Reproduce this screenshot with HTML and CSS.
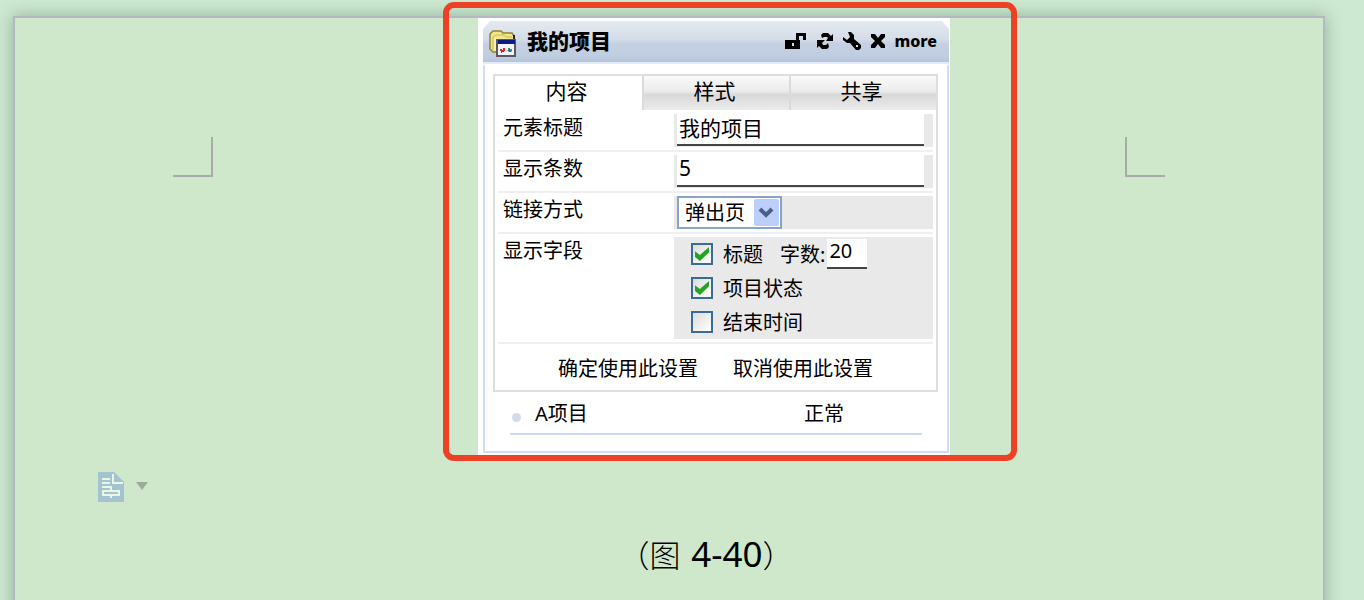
FILE: index.html
```html
<!DOCTYPE html>
<html lang="zh-CN">
<head>
    <meta charset="UTF-8">
    <meta name="viewport" content="width=device-width, initial-scale=1.0">
    <title>我的项目</title>
    <link rel="stylesheet" href="styles.css">
</head>
<body>
    <div class="page">
        <div class="page-margin">
            <div class="corner corner-left"></div>
            <button class="paste-btn" type="button" aria-label="粘贴选项">
                <svg width="52" height="30" viewBox="0 0 52 30">
                    <path d="M0 0h16l10 10v20H0z" fill="#a3c3d1"/>
                    <path d="M15 2v9h10M4 7h8M4 11h8M4 15h9v4M13 23v3M5 19h16v4H5z" fill="none" stroke="#e9f6e4" stroke-width="2"/>
                    <path d="M38 10h12l-6 8z" fill="#9eab9c"/>
                </svg>
            </button>
        </div>

        <div class="page-body">
            <div class="figure">
                <div class="widget">
                    <div class="widget-header">
                        <svg class="folder" width="28" height="28" viewBox="0 0 28 28">
                            <path d="M1 4l3-3h8l2 2h9l2 3v13l-3 3H4l-3-3z" fill="#f3e684" stroke="#8c8434" stroke-width="1.5"/>
                            <path d="M4 20V7l3-2h8l2 2h6" fill="none" stroke="#c9b94d"/>
                            <path d="M5 8h4v12H5z" fill="#fdf0b0"/>
                            <path d="M25 5v5" stroke="#222" stroke-width="2"/>
                            <rect x="8" y="10" width="18" height="16" fill="#f3f5fa" stroke="#5a5a5a" stroke-width="2"/>
                            <path d="M9 10h17v4H9z" fill="#0b1c86"/>
                            <path d="M11 19h2v1h1v-2h2v3h-1v1h-2v1h-1v-2h-1z" fill="#e0242a"/>
                            <path d="M19 18h2v1h2v2h-4z" fill="#29a544"/>
                            <path d="M18 20h3l2 2h-3z" fill="#3659d8"/>
                        </svg>
                        <h2>我的项目</h2>
                        <div class="tools">
                            <button type="button" aria-label="锁定">
                                <svg width="22" height="18" viewBox="0 0 22 18">
                                    <path d="M0 8h11V1h10v7h-3V4h-4v4h1v9H0z"/>
                                    <path d="M7 11h2v3H7z" fill="#d4dce7"/>
                                </svg>
                            </button>
                            <button type="button" aria-label="刷新">
                                <svg width="18" height="18" viewBox="0 0 18 18">
                                    <path d="M5 3l2-2h5l3 3 2-2v7h-7l2-3-1-1H8L6 6z"/>
                                    <path d="M13 15l-2 2H6l-3-3-2 2V8h8l-3 3 1 2h3l2-2z"/>
                                </svg>
                            </button>
                            <button type="button" aria-label="设置">
                                <svg width="18" height="18" viewBox="0 0 18 18">
                                    <path d="M5 0h3l3 3v4l7 6v3l-2 2h-3l-6-7H4L0 8V5l4 3 3-3z"/>
                                    <path d="M13 13h2v2h-2z" fill="#d4dce7"/>
                                </svg>
                            </button>
                            <button type="button" aria-label="关闭">
                                <svg width="16" height="16" viewBox="0 0 16 16">
                                    <path d="M1 1h4l3 4 3-4h4v3l-4 4 4 4v3h-4l-3-4-3 4H1v-3l4-4-4-4z"/>
                                </svg>
                            </button>
                            <a href="#">more</a>
                        </div>
                    </div>

                    <div class="widget-body">
                        <form class="settings">
                            <div class="tabs">
                                <button class="tab active" type="button">内容</button>
                                <button class="tab" type="button">样式</button>
                                <button class="tab" type="button">共享</button>
                            </div>
                            <div class="rows">
                                <div class="row">
                                    <label for="title">元素标题</label>
                                    <div class="cell">
                                        <input class="line-input" type="text" id="title" value="我的项目">
                                    </div>
                                </div>
                                <div class="row">
                                    <label for="count">显示条数</label>
                                    <div class="cell">
                                        <input class="line-input" type="text" id="count" value="5">
                                    </div>
                                </div>
                                <div class="row">
                                    <label for="link-type">链接方式</label>
                                    <div class="cell">
                                        <div class="select-box">
                                            <select id="link-type">
                                                <option selected>弹出页</option>
                                            </select>
                                            <svg class="arrow" width="25" height="27" viewBox="0 0 25 27">
                                                <rect width="25" height="27" rx="2" fill="#bccffa"/>
                                                <path d="M6 10l6 6 6-6" fill="none" stroke="#4a5f86" stroke-width="4"/>
                                            </svg>
                                        </div>
                                    </div>
                                </div>
                                <div class="row">
                                    <span class="row-label">显示字段</span>
                                    <div class="cell fields">
                                        <div class="field">
                                            <input type="checkbox" id="f-title" checked>
                                            <label for="f-title">标题</label>
                                            <label class="words" for="words">字数:</label>
                                            <input class="line-input small" type="text" id="words" value="20">
                                        </div>
                                        <div class="field">
                                            <input type="checkbox" id="f-status" checked>
                                            <label for="f-status">项目状态</label>
                                        </div>
                                        <div class="field">
                                            <input type="checkbox" id="f-end">
                                            <label for="f-end">结束时间</label>
                                        </div>
                                    </div>
                                </div>
                            </div>
                            <div class="actions">
                                <button type="button">确定使用此设置</button>
                                <button type="button">取消使用此设置</button>
                            </div>
                        </form>

                        <div class="item">
                            <span class="dot"></span>
                            <a href="#">A项目</a>
                            <span class="status">正常</span>
                        </div>
                    </div>
                </div>
                <div class="mark"></div>
            </div>

            <p class="caption">（图 <span>4-40</span>）</p>
        </div>

        <div class="page-margin">
            <div class="corner corner-right"></div>
        </div>
    </div>
</body>
</html>
```

FILE: styles.css
```css
* {
    box-sizing: border-box;
}
body {
    margin: 0;
    padding: 16px 39px 0 13px;
    height: 100vh;
    overflow: hidden;
    background-color: #cde9d2;
    font-family: "Noto Sans", "Noto Sans CJK SC", sans-serif;
    font-size: 20px;
    line-height: 30px;
    color: #000;
}
button, input, select {
    font: inherit;
    color: inherit;
}
button {
    padding: 0;
    border: none;
    background: none;
    cursor: pointer;
}
a {
    color: inherit;
    text-decoration: none;
}
svg {
    display: block;
}

/* Document page */
.page {
    display: grid;
    grid-template-columns: 198px 1fr 198px;
    min-height: 100vh;
    border: 2px solid #b4b8c1;
    background-color: #cfe8cb;
    box-shadow: 0 0 16px rgba(0, 40, 20, 0.3);
}
.page-margin {
    display: flex;
    flex-direction: column;
    align-items: flex-start;
    padding-top: 119px;
}
.corner {
    width: 40px;
    height: 40px;
    border-bottom: 2px solid #a9abaa;
}
.corner-left {
    align-self: flex-end;
    border-right: 2px solid #a9abaa;
}
.corner-right {
    border-left: 2px solid #a9abaa;
}
.paste-btn {
    margin: 295px 0 0 83px;
}
.page-body {
    display: flex;
    flex-direction: column;
    align-items: center;
}
.figure {
    position: relative;
    margin-left: 90px;
}

/* Red highlight frame around the figure */
.mark {
    position: absolute;
    top: -16px;
    right: -67px;
    bottom: -6px;
    left: -35px;
    border: 6px solid #ec4125;
    border-radius: 11px;
    pointer-events: none;
}

/* Widget */
.widget {
    width: 472px;
    padding: 3px 1px 2px 5px;
    background-color: #fff;
}
.widget-header {
    display: flex;
    align-items: center;
    height: 43px;
    padding: 0 12px 2px 6px;
    border-bottom: 2px solid #e3ebfb;
    background: linear-gradient(#e5eaf1 0%, #d3dce8 45%, #c5d1e2 55%, #c0cde0 88%, #b5c5dc 100%);
    clip-path: polygon(7px 0, calc(100% - 7px) 0, 100% 8px, 100% 100%, 0 100%, 0 8px);
}
.folder {
    margin-top: 6px;
}
.widget-header h2 {
    margin: 0 auto 0 10px;
    font-size: 21px;
    font-weight: 800;
}
.tools {
    display: flex;
    align-items: center;
    gap: 9px;
}
.tools a {
    margin-left: -1px;
    font-size: 16px;
    font-weight: 800;
}
.widget-body {
    padding: 8px 9px 16px 8px;
    border: 2px solid #d0ddf8;
    border-top-color: #fff;
}
.settings {
    border: 2px solid #dedede;
}
.tabs {
    display: grid;
    grid-template-columns: repeat(3, 1fr);
}
.tab {
    height: 34px;
    padding: 0 4px 4px 0;
    font-size: 21px;
    line-height: 28px;
    border-left: 2px solid #dadada;
    background: linear-gradient(#fafafa 0%, #ebebeb 45%, #d8d8d8 55%, #ececec 100%);
}
.tab.active {
    border-left: none;
    background: #fff;
}
.rows {
    padding: 1px 3px 0;
}
.row {
    display: grid;
    grid-template-columns: 176px 1fr;
    padding: 3px 0;
    border-bottom: 2px solid #efefef;
}
.row > label, .row-label {
    padding-left: 5px;
    line-height: 27px;
}
.cell {
    min-height: 33px;
    padding: 0 9px 0 3px;
    background-color: #e9e9e9;
}
.line-input {
    display: block;
    width: 100%;
    height: 32px;
    padding: 0 2px 4px;
    border: none;
    border-bottom: 2px solid #444;
    border-radius: 0;
    background-color: #fff;
    font-size: 21px;
    outline: none;
}
.select-box {
    position: relative;
    width: 105px;
}
.select-box select {
    display: block;
    width: 100%;
    height: 33px;
    padding: 0 0 4px 6px;
    border: 2px solid #86a5c8;
    border-radius: 0;
    background-color: #fff;
    appearance: none;
}
.arrow {
    position: absolute;
    top: 3px;
    right: 3px;
    pointer-events: none;
}
.cell.fields {
    padding: 0 0 0 17px;
}
.field {
    display: flex;
    align-items: center;
    height: 34px;
}
.field label {
    padding-top: 2px;
}
.field input[type="checkbox"] {
    appearance: none;
    width: 22px;
    height: 22px;
    margin: 0 10px 0 0;
    border: 2px solid #3a6a98;
    background: linear-gradient(135deg, #dcdcd6, #fff);
}
.field input[type="checkbox"]:checked::before {
    content: "";
    display: block;
    width: 14px;
    height: 14px;
    margin: 2px;
    background-color: #22a522;
    clip-path: polygon(0 30%, 35% 58%, 100% 0, 100% 38%, 35% 100%, 0 72%);
}
.field .words {
    margin-left: 17px;
}
.line-input.small {
    width: 40px;
    height: 30px;
    margin-left: 2px;
    font-size: 20px;
}
.actions {
    display: flex;
    justify-content: center;
    gap: 35px;
    height: 46px;
    padding-top: 3px;
}
.item {
    display: flex;
    align-items: center;
    height: 43px;
    padding-top: 3px;
    margin: 0 16px 0 17px;
    border-bottom: 2px solid #cbd8f8;
}
.dot {
    width: 9px;
    height: 9px;
    margin: 6px 14px 0 2px;
    border-radius: 50%;
    background-color: #d0dde8;
}
.status {
    width: 118px;
    margin-left: auto;
}

/* Figure caption */
.caption {
    margin: 77px 0 0 74px;
    font-family: "Noto Sans CJK SC", sans-serif;
    font-size: 31px;
    font-weight: 300;
    line-height: 44px;
    white-space: nowrap;
}
.caption span {
    margin-left: 4px;
    font-family: "Noto Sans", sans-serif;
    font-size: 35px;
    font-weight: 400;
}
```
